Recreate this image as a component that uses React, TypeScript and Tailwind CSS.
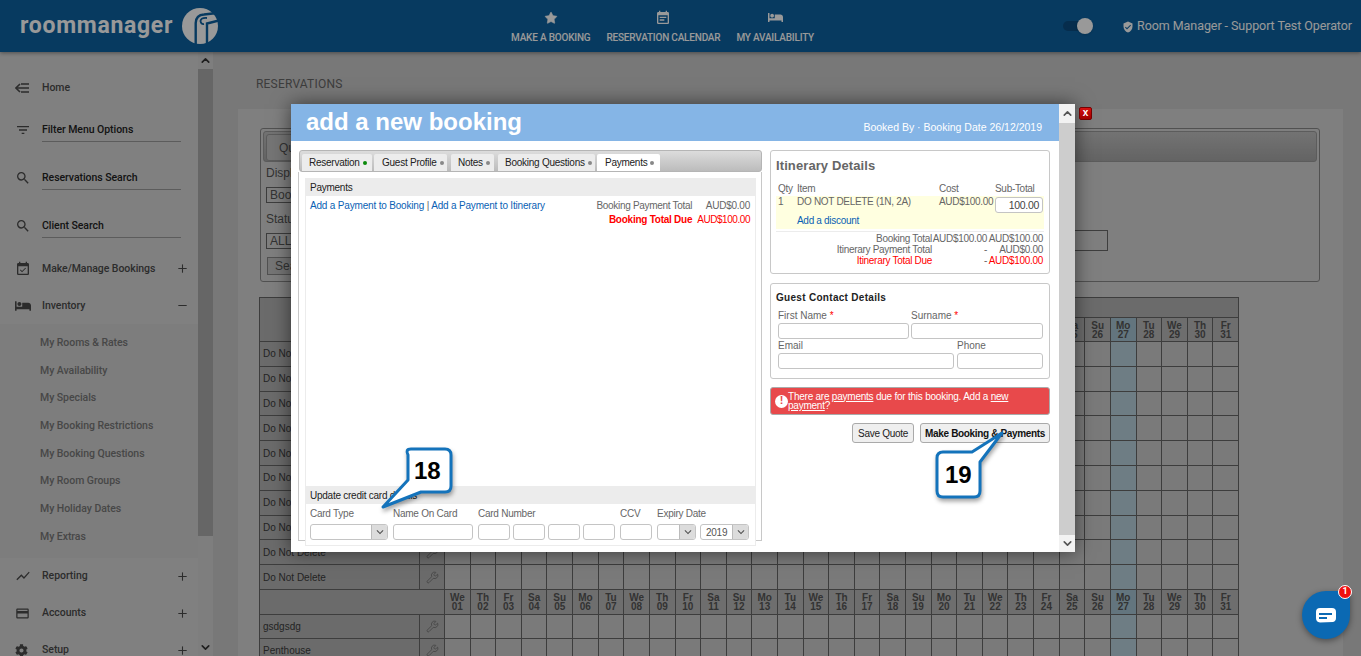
import React from "react";
import { ChevronUp, ChevronDown, Plus, Minus, Wrench, Star } from "lucide-react";
import { FaBed, FaCog } from "react-icons/fa";
import { MdSearch, MdEventAvailable, MdShowChart, MdCreditCard, MdEventNote, MdVerifiedUser, MdFilterList, MdKeyboardArrowDown } from "react-icons/md";

const dayNames = ["We", "Th", "Fr", "Sa", "Su", "Mo", "Tu"];
const days = Array.from({ length: 31 }, (_, i) => ({ n: dayNames[i % 7], d: String(i + 1).padStart(2, "0"), today: i === 26 }));
const subs = ["My Rooms & Rates", "My Availability", "My Specials", "My Booking Restrictions", "My Booking Questions", "My Room Groups", "My Holiday Dates", "My Extras"];

function HomeIcon() {
  return (
    <svg width="14" height="10" viewBox="0 0 14 10" fill="none" stroke="currentColor" strokeWidth="1.6">
      <path d="M5 1 L1 5 L5 9" />
      <path d="M2 5 H14 M6 1 H14 M6 9 H14" />
    </svg>
  );
}

function NavRow({ icon, label, action, line, h = "h-[24px]", mb = "" }: { icon: React.ReactNode; label: string; action?: "plus" | "minus"; line?: boolean; h?: string; mb?: string }) {
  return (
    <div className={`flex items-center pl-[15px] text-[#4a4a4a] ${h} ${mb}`}>
      <span className="w-[27px] shrink-0 flex items-center">{icon}</span>
      <span className={`flex-1 flex items-center h-full mr-[17px] text-[10.5px] font-medium tracking-[-0.05px] ${line ? "border-b border-[#999] text-[#222]" : ""}`}>{label}</span>
      {action === "plus" && <Plus size={13} strokeWidth={2} className="mr-[9px] ml-[-8px]" />}
      {action === "minus" && <Minus size={13} strokeWidth={2} className="mr-[9px] ml-[-8px]" />}
    </div>
  );
}

function Sidebar() {
  return (
    <div className="w-[198px] shrink-0 pt-[24px] bg-[#d6d6d6] font-['Roboto',sans-serif] overflow-hidden">
      <NavRow icon={<HomeIcon />} label="Home" mb="mb-[18px]" />
      <NavRow icon={<MdFilterList size={16} />} label="Filter Menu Options" line mb="mb-[24px]" />
      <NavRow icon={<MdSearch size={16} />} label="Reservations Search" line mb="mb-[24px]" />
      <NavRow icon={<MdSearch size={16} />} label="Client Search" line mb="mb-[12px]" />
      <NavRow icon={<MdEventAvailable size={16} />} label="Make/Manage Bookings" action="plus" h="h-[37px]" />
      <NavRow icon={<FaBed size={16} />} label="Inventory" action="minus" h="h-[37px]" />
      <div className="bg-[#d0d0d0] pt-[5px] pb-[7px] pl-[40px]">
        {subs.map((s) => (
          <div key={s} className="h-[27.7px] flex items-center text-[10.5px] font-medium tracking-[-0.05px] text-[#777]">{s}</div>
        ))}
      </div>
      <NavRow icon={<MdShowChart size={16} />} label="Reporting" action="plus" h="h-[37px]" />
      <NavRow icon={<MdCreditCard size={15} />} label="Accounts" action="plus" h="h-[37px]" />
      <NavRow icon={<FaCog size={13} />} label="Setup" action="plus" h="h-[37px]" />
    </div>
  );
}

function SideScroll() {
  return (
    <div className="w-[15px] shrink-0 flex flex-col bg-[#d2d2d2] text-[#333]">
      <div className="h-[17px] shrink-0 flex items-center justify-center"><ChevronUp size={13} strokeWidth={3} /></div>
      <div className="h-[467px] shrink-0 bg-[#aaaaaa]" />
      <div className="flex-1 flex items-end justify-center pb-[2px]"><ChevronDown size={13} strokeWidth={3} /></div>
    </div>
  );
}

function DayHead() {
  return (
    <>
      {days.map((d) => (
        <div key={d.d} className={`border-r border-b border-[#666] flex flex-col items-center justify-center text-[10px] leading-[9px] font-bold text-[#555] ${d.today ? "bg-[#a5c4d2]" : "bg-[#b8b8b8]"}`}>
          <span>{d.n}</span>
          <span>{d.d}</span>
        </div>
      ))}
    </>
  );
}

function Row({ label }: { label: string }) {
  return (
    <>
      <div className="border-r border-b border-l border-[#666] bg-[#b2b2b2] flex items-center pl-[3px] text-[10px] text-[#3c3c3c]">{label}</div>
      <div className="border-r border-b border-[#666] bg-[#b2b2b2] flex items-center justify-center text-[#666]"><Wrench size={13} strokeWidth={1.3} /></div>
      {days.map((d) => (
        <div key={d.d} className={`border-r border-b border-[#666] ${d.today ? "bg-[#b8d0dc]" : "bg-[#cbcbcb]"}`} />
      ))}
    </>
  );
}

function Grid() {
  const rows = Array.from({ length: 10 }, () => "Do Not Delete");
  return (
    <div className="mt-[15px] ml-[-1px] w-[980px] font-['Liberation_Sans',sans-serif] border-t border-[#666] grid grid-cols-[161px_25px_repeat(31,minmax(0,1fr))] grid-rows-[20px_24px_repeat(10,24.8px)_25px_24px_24px]">
      <div className="col-span-2 row-span-2 bg-[#b2b2b2] border-l border-r border-b border-[#666]" />
      <div className="col-[span_31] bg-[#b2b2b2] border-r border-b border-[#666]" />
      <DayHead />
      {rows.map((r, i) => (
        <Row key={i} label={r} />
      ))}
      <div className="col-span-2 bg-[#b2b2b2] border-l border-r border-b border-[#666]" />
      <DayHead />
      <Row label="gsdgsdg" />
      <Row label="Penthouse" />
    </div>
  );
}

function SearchBox() {
  return (
    <div className="h-[154px] rounded-[3px] border border-[#888] p-[2px] font-['Liberation_Sans',sans-serif] text-[#555] text-[12px]">
      <div className="h-[31px] rounded-[3px] border border-[#999] bg-gradient-to-b from-[#c0c0c0] to-[#a6a6a6] flex items-end pl-[2px]">
        <div className="h-[27px] w-[60px] border border-[#999] rounded-[3px] bg-[#c4c4c4] pl-[12px] flex items-center">Quick</div>
      </div>
      <div className="pl-[3px] mt-[4px] leading-[14px]">Display</div>
      <div className="ml-[3px] mt-[7px] h-[16px] w-[120px] border border-[#666] pl-[3px] leading-[14px]">Booking</div>
      <div className="pl-[3px] mt-[9px] leading-[14px]">Status</div>
      <div className="flex items-start">
        <div className="ml-[3px] mt-[7px] h-[16px] w-[120px] border border-[#666] pl-[3px] leading-[14px]">ALL</div>
        <div className="ml-[282px] mt-[4px] h-[21px] w-[440px] border border-[#686868]" />
      </div>
      <div className="ml-[4px] mt-[6px] h-[18px] w-[60px] border border-[#888] bg-[#c4c4c4] pl-[7px] leading-[16px]">Search</div>
    </div>
  );
}

function TopNavItem({ icon, label }: { icon: React.ReactNode; label: string }) {
  return (
    <div className="flex flex-col items-center">
      <div className="h-[20px] flex items-center">{icon}</div>
      <div className="text-[10px] mt-[4px] leading-[12px] font-medium tracking-[-0.2px]">{label}</div>
    </div>
  );
}

function Logo() {
  return (
    <svg width="38" height="36" viewBox="0 0 38 36" className="ml-[8px]">
      <circle cx="19" cy="18" r="18" fill="#ffffff" />
      <path d="M14.7 37 V15 Q15 7 23 6.5 L36 5" fill="none" stroke="#0d61a0" strokeWidth="2.4" />
      <path d="M26 37 V15.5 L38 12.5" fill="none" stroke="#0d61a0" strokeWidth="2.4" />
      <path d="M26 10 Q20 9.5 19.5 13 Q20 16.5 23 16" fill="none" stroke="#0d61a0" strokeWidth="1.8" />
    </svg>
  );
}

function Header() {
  return (
    <div className="h-[52px] shrink-0 bg-[#0d61a0] text-white flex items-center relative z-10 shadow-[0_1px_4px_rgba(0,0,0,0.4)] font-['Roboto',sans-serif]">
      <div className="w-[511px] shrink-0 pl-[20px] flex items-center">
        <span className="text-[23px] font-bold tracking-[0.7px] leading-[30px] w-[153px] whitespace-nowrap">roommanager</span>
        <Logo />
      </div>
      <div className="flex gap-[16px] mt-[-1px]">
        <TopNavItem icon={<Star size={14} fill="currentColor" strokeWidth={1} />} label="MAKE A BOOKING" />
        <TopNavItem icon={<MdEventNote size={16} />} label="RESERVATION CALENDAR" />
        <TopNavItem icon={<FaBed size={15} />} label="MY AVAILABILITY" />
      </div>
      <div className="flex-1" />
      <div className="relative w-[30px] h-[16px] mr-[29px]">
        <div className="absolute left-0 top-[3px] w-[26px] h-[10px] rounded-full bg-[#0a4c80]" />
        <div className="absolute right-0 top-0 w-[16px] h-[16px] rounded-full bg-white shadow" />
      </div>
      <MdVerifiedUser size={12} className="mr-[3px] mt-[1px]" />
      <span className="text-[12.5px] mr-[9px] mt-[1px] tracking-[-0.07px]">Room Manager - Support Test Operator</span>
    </div>
  );
}

function Tabs() {
  const tabs = [
    { t: "Reservation", w: "w-[70px] mr-[2px] pl-[7px]", dot: "bg-[#0a8a0a]" },
    { t: "Guest Profile", w: "w-[73px] mr-[4px] pl-[8px]", dot: "bg-[#888]" },
    { t: "Notes", w: "w-[43px] mr-[4px] pl-[7px]", dot: "bg-[#888]" },
    { t: "Booking Questions", w: "w-[97px] mr-[2px] pl-[7px]", dot: "bg-[#888]" },
    { t: "Payments", w: "w-[63px] pl-[8px]", dot: "bg-[#888]", active: true },
  ];
  return (
    <div className="h-[22px] rounded-[3px] border border-[#b5b5b5] bg-gradient-to-b from-[#dcdcdc] to-[#bcbcbc] flex items-end pl-[2px]">
      {tabs.map((t) => (
        <div key={t.t} className={`${t.w} h-[17px] rounded-t-[2px] flex items-center gap-[3px] text-[#222] whitespace-nowrap ${t.active ? "bg-white" : "bg-[#ececec]"}`}>
          <span>{t.t}</span>
          <span className={`w-[4px] h-[4px] rounded-full ${t.dot}`} />
        </div>
      ))}
    </div>
  );
}

function Inp({ w, h = "h-[16px]" }: { w: string; h?: string }) {
  return <div className={`${w} ${h} shrink-0 bg-white border border-[#c4c4c4] rounded-[3px]`} />;
}

function Sel({ w, value }: { w: string; value?: string }) {
  return (
    <div className={`${w} h-[16px] shrink-0 bg-white border border-[#c4c4c4] rounded-[3px] flex items-center justify-between overflow-hidden`}>
      <span className="pl-[5px] text-[#555]">{value}</span>
      <div className="w-[16px] h-full bg-[#dcdcdc] flex items-center justify-center text-[#555] border-l border-[#bbb]"><MdKeyboardArrowDown size={14} /></div>
    </div>
  );
}

function PaymentsPanel() {
  return (
    <div className="w-[463px] shrink-0">
      <Tabs />
      <div className="h-[369px] border-x border-b border-[#c8c8c8] pl-[6px] pr-[5px] pt-[6px] ml-[-1px]">
        <div className="h-[368px] border-b border-x border-[#ececec] flex flex-col bg-white relative">
          <div className="h-[18px] shrink-0 bg-[#ececec] flex items-center pl-[4px] text-[#222]">Payments</div>
          <div className="flex justify-between pl-[4px] pr-[5px] pt-[3px] flex-1">
            <div className="text-[#0a5fb4] leading-[14px] tracking-[-0.18px]">Add a Payment to Booking <span className="text-[#666]">|</span> Add a Payment to Itinerary</div>
            <div className="grid grid-cols-[auto_auto] gap-x-[5px] text-right leading-[14px] content-start">
              <span className="text-[#666] tracking-[-0.3px]">Booking Payment Total</span><span className="text-[#666]">AUD$0.00</span>
              <span className="text-[#f00] font-bold">Booking Total Due</span><span className="text-[#f00] tracking-[-0.45px]">AUD$100.00</span>
            </div>
          </div>
          <div className="h-[18px] shrink-0 bg-[#ececec] flex items-center pl-[4px] text-[#222]">Update credit card details</div>
          <div className="grid grid-cols-[83px_85px_142px_37px_auto] pl-[4px] mt-[3px] text-[#666] leading-[14px]">
            <span>Card Type</span><span>Name On Card</span><span>Card Number</span><span>CCV</span><span>Expiry Date</span>
          </div>
          <div className="flex pl-[4px] pt-[3px] pb-[5px]">
            <Sel w="w-[78px] mr-[5px]" />
            <Inp w="w-[80px] mr-[5px]" />
            <Inp w="w-[32px] mr-[3px]" />
            <Inp w="w-[32px] mr-[3px]" />
            <Inp w="w-[32px] mr-[3px]" />
            <Inp w="w-[32px] mr-[5px]" />
            <Inp w="w-[32px] mr-[5px]" />
            <Sel w="w-[39px] mr-[4px]" />
            <Sel w="w-[49px]" value="2019" />
          </div>
        </div>
      </div>
    </div>
  );
}

function Itinerary() {
  return (
    <div className="h-[124px] border border-[#c8c8c8] rounded-[3px] px-[5px] pt-[6px] text-[#666] tracking-[-0.3px]">
      <div className="text-[13px] font-bold text-[#666] leading-[18px] tracking-[0.1px]">Itinerary Details</div>
      <div className="grid grid-cols-[19px_142px_56px_auto] mt-[8px] leading-[12px] pl-[2px]">
        <span>Qty</span><span>Item</span><span>Cost</span><span>Sub-Total</span>
      </div>
      <div className="bg-[#ffffe0] h-[33px] grid grid-cols-[19px_142px_56px_auto] pl-[2px] leading-[12px] mt-[1px]">
        <span>1</span>
        <div>
          <div>DO NOT DELETE (1N, 2A)</div>
          <div className="text-[#0a5fb4] mt-[7px]">Add a discount</div>
        </div>
        <span>AUD$100.00</span>
        <div className="h-[16px] w-[48px] bg-white border border-[#c4c4c4] rounded-[3px] text-right pr-[3px] text-[10.5px] text-[#444] leading-[14px] mt-[1px]">100.00</div>
      </div>
      <div className="border-t border-[#ececec] mt-[2px] pt-[1px] grid grid-cols-[156px_55px_56px] text-right leading-[11px]">
        <span>Booking Total</span><span>AUD$100.00</span><span>AUD$100.00</span>
        <span>Itinerary Payment Total</span><span>-</span><span>AUD$0.00</span>
        <span className="text-[#f00]">Itinerary Total Due</span><span>-</span><span className="text-[#f00]">AUD$100.00</span>
      </div>
    </div>
  );
}

function GuestDetails() {
  return (
    <div className="h-[96px] mt-[9px] border border-[#c8c8c8] rounded-[3px] px-[7px] pt-[8px] text-[#666] tracking-normal">
      <div className="text-[#222] font-bold ml-[-2px] leading-[11px] tracking-[0.3px]">Guest Contact Details</div>
      <div className="flex gap-[2px] mt-[7px] mb-[1px] leading-[12px]">
        <div className="w-[131px]">First Name <span className="text-[#f00]">*</span></div>
        <div>Surname <span className="text-[#f00]">*</span></div>
      </div>
      <div className="flex gap-[2px]"><Inp w="w-[131px]" /><Inp w="w-[132px]" /></div>
      <div className="flex gap-[3px] mb-[1px] leading-[13px]">
        <div className="w-[176px]">Email</div>
        <div>Phone</div>
      </div>
      <div className="flex gap-[3px]"><Inp w="w-[176px]" /><Inp w="w-[86px]" /></div>
    </div>
  );
}

function RightPanel() {
  return (
    <div className="w-[280px] shrink-0 ml-[8px]">
      <Itinerary />
      <GuestDetails />
      <div className="h-[28px] mt-[8px] bg-[#e8494b] border border-[#aaa] rounded-[3px] flex items-center pl-[4px] text-white leading-[9.5px] tracking-[-0.23px]">
        <span className="w-[13px] h-[13px] shrink-0 rounded-full bg-white text-[#e8494b] text-[11px] font-bold flex items-center justify-center">!</span>
        <div>
          <div>There are <u>payments</u> due for this booking. Add a <u>new</u></div>
          <div><u>payment</u>?</div>
        </div>
      </div>
      <div className="flex justify-end gap-[6px] mt-[8px]">
        <div className="h-[20px] w-[62px] rounded-[3px] border border-[#aaa] bg-[#efefef] flex items-center justify-center text-[#222] tracking-[-0.3px]">Save Quote</div>
        <div className="h-[20px] w-[130px] rounded-[3px] border border-[#aaa] bg-[#efefef] flex items-center justify-center text-[#111] font-bold tracking-[-0.35px] whitespace-nowrap">Make Booking &amp; Payments</div>
      </div>
    </div>
  );
}

function Modal() {
  return (
    <div className="absolute left-[291px] top-[104px] w-[784px] h-[448px] bg-white flex shadow-[0_0_18px_rgba(0,0,0,0.55)] font-['Liberation_Sans',sans-serif] text-[10px] tracking-[-0.25px]">
      <div className="w-[768px] shrink-0 flex flex-col">
        <div className="h-[37px] shrink-0 bg-[#85b5e6] flex items-center justify-between pl-[15px] pr-[17px] text-white tracking-normal">
          <span className="text-[24px] font-bold leading-[36px] mt-[-1px]">add a new booking</span>
          <span className="text-[10.5px] mt-[10px]">Booked By · Booking Date 26/12/2019</span>
        </div>
        <div className="flex pl-[8px] pt-[9px]">
          <PaymentsPanel />
          <RightPanel />
        </div>
      </div>
      <div className="w-[16px] shrink-0 flex flex-col bg-[#cdcdcd] text-[#555]">
        <div className="h-[19px] bg-[#f2f2f2] flex items-center justify-center"><ChevronUp size={13} strokeWidth={3} /></div>
        <div className="flex-1" />
        <div className="h-[17px] bg-[#f2f2f2] flex items-center justify-center"><ChevronDown size={13} strokeWidth={3} /></div>
      </div>
    </div>
  );
}

function Callout({ className, vb, w, h, d, text, textClass }: { className: string; vb: string; w: number; h: number; d: string; text: string; textClass: string }) {
  return (
    <div className={`absolute ${className}`} style={{ width: w, height: h }}>
      <svg width={w} height={h} viewBox={vb} className="absolute inset-0 overflow-visible">
        <path d={d} fill="#fff" stroke="#1473bb" strokeWidth="3" strokeLinejoin="round" style={{ filter: "drop-shadow(1px 3px 2px rgba(0,0,0,0.35))" }} />
      </svg>
      <span className={`absolute font-['Liberation_Sans',sans-serif] font-bold text-[24px] leading-[28px] text-black ${textClass}`}>{text}</span>
    </div>
  );
}

export default function App() {
  return (
    <div className="relative w-[1361px] h-[656px] overflow-hidden flex flex-col bg-[#c8c8c8]">
      <Header />
      <div className="flex flex-1 min-h-0">
        <Sidebar />
        <SideScroll />
        <div className="flex-1 min-w-0 pl-[25px] pr-[18px] overflow-hidden font-['Roboto',sans-serif]">
          <div className="h-[57px] pl-[18px] pt-[24px] text-[12px] tracking-[0.2px] text-[#666] leading-[16px]">RESERVATIONS</div>
          <div className="bg-[#d4d4d4] pt-[19px] pl-[22px] pr-[23px] h-[560px]">
            <SearchBox />
            <Grid />
          </div>
        </div>
      </div>
      <div className="absolute inset-0 bg-black/40 z-20" />
      <div className="z-30 absolute inset-0">
        <Modal />
        <div className="absolute left-[1079px] top-[107px] w-[13px] h-[13px] rounded-[2px] bg-gradient-to-b from-[#d81010] to-[#a00000] border border-[#700] text-white text-[10px] font-bold leading-[10px] text-center font-['Liberation_Sans',sans-serif]">x</div>
        <Callout className="left-[380px] top-[446px]" w={75} h={65} vb="380 446 75 65" text="18" textClass="left-[34px] top-[11px]"
          d="M411 449 H445 Q451 449 451 455 V486 Q451 492 445 492 H421 L383 507 L408 480 V455 Q405 449 411 449 Z" />
        <Callout className="left-[935px] top-[430px]" w={70} h={70} vb="935 430 70 70" text="19" textClass="left-[10px] top-[31px]"
          d="M943 452 H972 L1002 433 L980 462 V491 Q980 497 974 497 H943 Q937 497 937 491 V458 Q937 452 943 452 Z" />
        <div className="absolute left-[1302px] top-[591px] w-[48px] h-[48px] bg-[#0b69b3] rounded-[50%_4px_50%_50%] shadow-[0_2px_6px_rgba(0,0,0,0.4)] flex items-center justify-center">
          <svg width="20" height="15" viewBox="0 0 20 15">
            <path d="M4 0 H16 Q20 0 20 4 V10 Q20 13 17 14 L4 14.5 Q0 14 0 10 V4 Q0 0 4 0 Z" fill="#fff" />
            <path d="M3 5 H16 V7 H3 Z M3 9 H11 V11 H3 Z" fill="#0b69b3" />
          </svg>
        </div>
        <div className="absolute left-[1338px] top-[585px] w-[14px] h-[14px] rounded-full bg-[#f01010] border border-white text-white text-[9px] font-bold flex items-center justify-center font-['Roboto',sans-serif]">1</div>
      </div>
    </div>
  );
}
